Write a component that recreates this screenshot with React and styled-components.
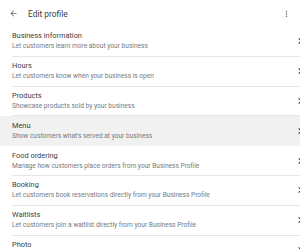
import styled, { createGlobalStyle } from "styled-components"

const Global = createGlobalStyle`
  html, body {
    margin: 0;
    padding: 0;
    background: #fff;
    overflow: hidden;
  }
  body {
    font-family: Roboto, "Noto Sans", Arial, sans-serif;
  }
`

const Page = styled.div`
  width: 300px;
  height: 250px;
  overflow: hidden;
  background: #fff;
`
const Header = styled.div`
  display: flex;
  align-items: center;
  height: 27px;
  padding: 0 9px 0 9px;
`
const Title = styled.div`
  flex: 1;
  margin-left: 10px;
  font-size: 8.4px;
  color: #3c4043;
`
const IconBtn = styled.span`
  display: flex;
  align-items: center;
  justify-content: center;
  color: #5f6368;
`
const List = styled.div`
  display: flex;
  flex-direction: column;
`
const Row = styled.div`
  display: flex;
  align-items: center;
  height: 29.8px;
  padding-left: 12px;
  background: ${(p) => (p.$active ? "#f1f1f1" : "transparent")};
`
const RowBody = styled.div`
  flex: 1;
  min-width: 0;
  align-self: stretch;
  display: flex;
  align-items: center;
  border-bottom: 1px solid ${(p) => (p.$active ? "transparent" : "#e6e6e6")};
`
const Text = styled.div`
  flex: 1;
  min-width: 0;
  display: flex;
  flex-direction: column;
  gap: 1px;
  white-space: nowrap;
  overflow: hidden;
`
const RowTitle = styled.div`
  font-size: 7.4px;
  line-height: 10px;
  color: #3c4043;
`
const RowSub = styled.div`
  font-size: 6.6px;
  line-height: 9px;
  color: #757a80;
`
const Chevron = styled.span`
  width: 12px;
  margin-right: -6px;
  display: flex;
  color: #3c4043;
`

const items = [
  ["Business information", "Let customers learn more about your business"],
  ["Hours", "Let customers know when your business is open"],
  ["Products", "Showcase products sold by your business"],
  ["Menu", "Show customers what's served at your business"],
  ["Food ordering", "Manage how customers place orders from your Business Profile"],
  ["Booking", "Let customers book reservations directly from your Business Profile"],
  ["Waitlists", "Let customers join a waitlist directly from your Business Profile"],
  ["Photo", "Add photos of your business"],
]

export default function App() {
  return (
    <Page>
      <Global />
      <Header>
        <IconBtn>
          <svg width="9" height="9" viewBox="0 0 24 24" fill="currentColor">
            <path d="M20 11H7.83l5.59-5.59L12 4l-8 8 8 8 1.41-1.41L7.83 13H20v-2z" />
          </svg>
        </IconBtn>
        <Title>Edit profile</Title>
        <IconBtn>
          <svg width="9" height="10" viewBox="0 0 24 24" fill="currentColor">
            <path d="M12 8c1.1 0 2-.9 2-2s-.9-2-2-2-2 .9-2 2 .9 2 2 2zm0 2c-1.1 0-2 .9-2 2s.9 2 2 2 2-.9 2-2-.9-2-2-2zm0 6c-1.1 0-2 .9-2 2s.9 2 2 2 2-.9 2-2-.9-2-2-2z" />
          </svg>
        </IconBtn>
      </Header>
      <List>
        {items.map(([t, s]) => (
          <Row key={t} $active={t === "Menu"}>
            <RowBody $active={t === "Menu"}>
              <Text>
                <RowTitle>{t}</RowTitle>
                <RowSub>{s}</RowSub>
              </Text>
              <Chevron>
                <svg width="12" height="12" viewBox="0 0 24 24" fill="currentColor">
                  <path d="M8.59 16.59L13.17 12 8.59 7.41 10 6l6 6-6 6-1.41-1.41z" />
                </svg>
              </Chevron>
            </RowBody>
          </Row>
        ))}
      </List>
    </Page>
  )
}
